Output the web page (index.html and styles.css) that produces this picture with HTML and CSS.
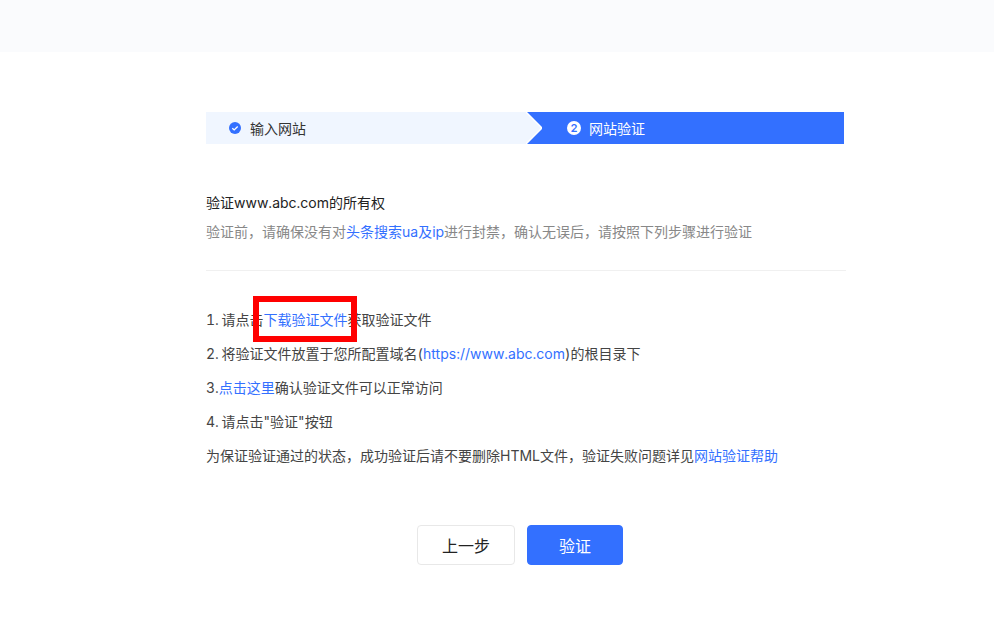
FILE: index.html
```html
<!DOCTYPE html>
<html lang="zh-CN">
<head>
<meta charset="utf-8">
<title>网站验证</title>
<link rel="stylesheet" href="styles.css">
</head>
<body>
<header class="topbar"></header>
<main class="content">
  <div class="steps">
    <div class="step step-done">
      <svg class="check" width="14" height="14" viewBox="0 0 14 14"><circle cx="7" cy="7" r="6" fill="#3370ff"/><path d="M4.3 7.2 6.2 8.9 9.7 5.6" fill="none" stroke="#fff" stroke-width="1.4"/></svg>
      <span class="step-label">输入网站</span>
    </div>
    <svg class="chevron" width="16" height="32" viewBox="0 0 16 32"><path d="M0 0 16 16 0 32Z" fill="#f0f6ff"/><path d="M0 0 16 16 0 32" fill="none" stroke="#fff" stroke-width="1.5"/></svg>
    <div class="step step-active">
      <span class="num">2</span>
      <span class="step-label">网站验证</span>
    </div>
  </div>
  <section class="intro">
    <h1 class="title">验证www.abc.com的所有权</h1>
    <p class="sub">验证前，请确保没有对<a class="link" href="#">头条搜索ua及ip</a>进行封禁，确认无误后，请按照下列步骤进行验证</p>
  </section>
  <ul class="list">
    <li>1. 请点击<span class="marked"><a class="link" href="#">下载验证文件</a><span class="redbox"></span></span>获取验证文件</li>
    <li>2. 将验证文件放置于您所配置域名(<a class="link" href="#">https://www.abc.com</a>)的根目录下</li>
    <li>3.<a class="link" href="#">点击这里</a>确认验证文件可以正常访问</li>
    <li>4. 请点击"验证"按钮</li>
    <li>为保证验证通过的状态，成功验证后请不要删除HTML文件，验证失败问题详见<a class="link" href="#">网站验证帮助</a></li>
  </ul>
  <div class="actions">
    <button class="btn btn-plain" type="button">上一步</button>
    <button class="btn btn-primary" type="button">验证</button>
  </div>
</main>
</body>
</html>
```
FILE: styles.css
```css
* { box-sizing: border-box; }
html, body { margin: 0; padding: 0; background: #fff; }
body {
  font-family: "Inter", "Noto Sans CJK SC", sans-serif;
  font-size: 14px;
  font-feature-settings: "tnum";
  color: #444;
  height: 643px;
  overflow: hidden;
}
.topbar { height: 52px; background: #fafbfd; }
.content { width: 640px; margin-left: 206px; padding-top: 60px; }
.steps { display: flex; width: 638px; height: 32px; }
.step { display: flex; align-items: center; height: 32px; line-height: 20px; }
.step-label { padding-top: 1px; }
.step-done { width: 321px; background: #f0f6ff; color: #333; padding-left: 22px; }
.check { margin-right: 8px; }
.chevron { display: block; background: #3370ff; flex: none; margin-left: -1px; }
.step-active { flex: 1; background: #3370ff; color: #fff; padding-left: 24px; }
.num {
  width: 14px; height: 14px; border-radius: 50%;
  background: #fff; color: #3370ff;
  font-size: 11px; line-height: 14px; text-align: center;
  margin-right: 8px; margin-left: 1px; font-weight: 600;
}
.intro { padding-top: 48px; height: 127px; border-bottom: 1px solid #f0f0f0; }
.title { margin: 0; font-size: 14px; font-weight: 400; line-height: 22px; color: #222; }
.sub { margin: 8px 0 0; line-height: 20px; color: #888; white-space: nowrap; }
.link { color: #3370ff; text-decoration: none; }
.list { list-style: none; margin: 32px 0 0; padding: 0; word-spacing: -1px; }
.list li { height: 34px; line-height: 34px; white-space: nowrap; }
.marked { position: relative; }
.redbox {
  position: absolute; left: -11px; top: -15px;
  width: 104px; height: 46px;
  border: 6px solid #f00;
}
.actions { display: flex; gap: 12px; margin: 52px 0 0 211px; }
.btn {
  height: 40px; border-radius: 4px; font: inherit; font-size: 16px;
  padding: 0; cursor: pointer;
}
.btn-plain { width: 98px; background: #fff; border: 1px solid #e8e8e8; color: #222; }
.btn-primary { width: 96px; background: #3370ff; border: 1px solid #3370ff; color: #fff; }
```
